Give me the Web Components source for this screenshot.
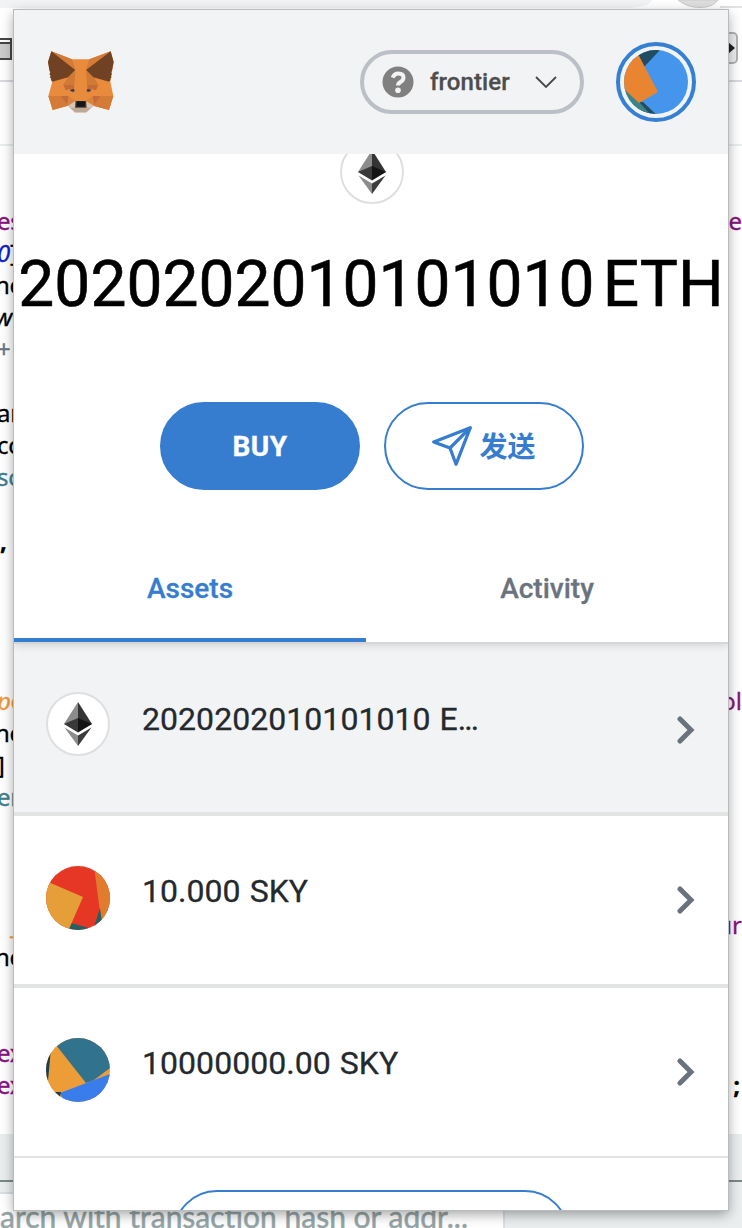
<!DOCTYPE html>
<html lang="zh-CN">
<head>
<meta charset="utf-8">
<title>Wallet</title>
<style>
html,body{margin:0;height:1228px;overflow:hidden;background:#fff}
body{font-family:Roboto,"Noto Sans CJK SC",sans-serif;position:relative;width:742px}
</style>
</head>
<body>
<page-backdrop></page-backdrop>
<wallet-popup></wallet-popup>
<script>
function define(name, html) {
  const t = document.createElement('template');
  t.innerHTML = html;
  customElements.define(name, class extends HTMLElement {
    constructor() {
      super();
      this.attachShadow({mode: 'open'}).appendChild(t.content.cloneNode(true));
    }
  });
}

define('code-line', `<style>
:host{display:flex;justify-content:space-between;height:32px;font:24px/34px "Noto Sans",sans-serif;color:#000;white-space:pre;-webkit-text-stroke:.3px}
.l{width:14px;overflow:hidden;color:var(--c,#000);text-indent:var(--in,-3px);letter-spacing:-.3px}
.r{width:14px;overflow:hidden;color:var(--rc,#881280);display:flex;justify-content:flex-end}
</style><span class="l"><slot></slot></span><span class="r"><slot name="end"></slot></span>`);

define('page-backdrop', `<style>
:host{display:flex;flex-direction:column;width:742px;height:1228px;background:#fff;overflow:hidden}
.top{height:8px;display:flex;justify-content:space-between;flex:none}
.addr{width:652px;background:#f1f3f4;border-radius:0 0 28px 0/0 0 8px 0}
.tools{height:72px;display:flex;justify-content:space-between;flex:none;border-bottom:2px solid #d9dae0}
.tools svg{display:block}
.band{height:62px;border-bottom:2px solid #ebeeef;flex:none}
.code{height:930px;padding-top:58px;box-sizing:content-box;flex:none}
.foot{flex:1;background:#eaeeef;display:flex;flex-direction:column}
.rule{height:46px;border-bottom:2px solid #7c8888;flex:none}
.search{margin-top:10px;width:503px;height:40px;border-top:2px solid #dadfe2;border-right:2px solid #dadfe2;background:#fff;font:30px/45px Lato,sans-serif;color:#95a5a6;-webkit-text-stroke:.5px #95a5a6;white-space:nowrap}
i{font-style:italic}
.n{--in:-5px}
</style>
<div class="top"><div class="addr"></div><svg width="66" height="8"><path d="M44 7H66" stroke="#e1e2e4" stroke-width="2"/><path d="M2 0Q11 7.500 24 7.500T42 0Z" fill="#dededf" stroke="#cbcbcc"/></svg></div>
<div class="tools"><svg width="14" height="72"><path d="M0 31H11V51H0" fill="#ccc" stroke="#454545" stroke-width="2"/><path d="M0 32H10V34H0Z" fill="#fff"/><path d="M0 35H11" stroke="#454545" stroke-width="2"/></svg>
<svg width="14" height="72"><rect x="-16" y="25" width="25" height="30" rx="4" fill="#eee" stroke="#b2b2b2" stroke-width="2"/><path d="M0 34L7 40L0 46Z" fill="#222"/></svg></div>
<div class="band"></div>
<div class="code">
<code-line style="--c:#881280">es<span slot="end">le</span></code-line>
<code-line style="--c:#0d22cc"><i>0</i><span style="color:#000">]</span></code-line>
<code-line class="n">ne</code-line>
<code-line class="n"><i>w</i>e</code-line>
<code-line style="--c:#697685">+</code-line>
<code-line></code-line>
<code-line>ar</code-line>
<code-line>cc</code-line>
<code-line style="--c:#40808f">sc</code-line>
<code-line></code-line>
<code-line><b style="padding-left:3px">,</b></code-line>
<code-line></code-line><code-line></code-line><code-line></code-line><code-line></code-line>
<code-line style="--c:#ee9a3c"><i>p</i>o<span slot="end">ol</span></code-line>
<code-line class="n">ne</code-line>
<code-line>]</code-line>
<code-line style="--c:#40808f">er</code-line>
<code-line></code-line><code-line></code-line><code-line></code-line>
<code-line style="--c:#ee9a3c"><span style="padding-left:13px">_</span><span slot="end">ur</span></code-line>
<code-line class="n">ne</code-line>
<code-line></code-line><code-line></code-line>
<code-line style="--c:#881280">ex</code-line>
<code-line style="--c:#881280;--rc:#000">ex<b slot="end" style="padding-right:2px">;</b></code-line>
</div>
<div class="foot"><div class="rule"></div><div class="search">arch with transaction hash or addr...</div></div>`);

define('fox-logo', `<style>:host{display:block;width:70px;height:64px}svg{display:block}</style>
<svg width="70" height="64" viewBox="30 30 210 192">
<path d="M46 34L108 58H160L224 34L233 66L223 125L232 168L219 210L172 197L151 217H116L96 197L50 210L37 168L49 125L36 66Z" fill="#e88b3c"/>
<path d="M46 34L108 58L118 90ZM224 34L160 58L150 90Z" fill="#d37b37"/>
<path d="M37 168H78L96 197L50 210ZM232 168H190L172 197L219 210Z" fill="#d57b38"/>
<path d="M118 92L96 112L82 134L115 135ZM150 92L174 112L187 134L153 135Z" fill="#d07a35"/>
<path d="M82 134L115 136L112 158L101 147L89 151ZM187 134L153 136L156 158L167 147L180 151Z" fill="#c46b38"/>
<path d="M75 168H98L94 195ZM193 168H170L174 195Z" fill="#c46b38"/>
<path d="M98 168L120 183L94 197ZM170 168L148 183L174 197Z" fill="#d98341"/>
<path d="M46 34L118 90L96 112L49 125L44 119L46 117L41 111L44 108L40 102L43 98L40 91L36 66Z" fill="#704123"/>
<path d="M224 34L150 90L172 112L219 125L224 119L222 117L227 111L224 108L228 102L225 98L228 91L233 66Z" fill="#704123"/>
<path d="M96 198L117 184V203H151V184L174 198L151 217H117Z" fill="#d7c6ba"/>
<path d="M103 203H164L151 217H117Z" fill="#bda998"/>
<path d="M119 183H150L152 203H117Z" fill="#454545"/><path d="M122 184H148L147 200H121Z" fill="#151617"/>
<path d="M101 151L113 146L117 154L108 155ZM166 151L155 146L151 154L160 155Z" fill="#334052"/>
</svg>`);

define('network-picker', `<style>
:host{display:flex;box-sizing:border-box;width:224px;height:64px;border:4px solid #bbbfc6;border-radius:32px;align-items:center;padding-left:18px;font:500 24px/32px Roboto,sans-serif;color:#4d4d4d}
.t{margin-left:16px;width:80px;white-space:nowrap;letter-spacing:.1px;-webkit-text-stroke:.3px}
.v{margin-left:25px}svg{display:block;flex:none}
</style><svg width="32" height="32" viewBox="0 0 32 32"><circle cx="16" cy="16" r="15.500" fill="#808080"/><path d="M10.700 11.700Q12 7.500 16.200 7.500Q21.500 7.500 21.500 11.700Q21.500 14.200 18.500 16Q16 17.500 16 19.500" fill="none" stroke="#f2f3f4" stroke-width="4"/><circle cx="16" cy="24.200" r="2.800" fill="#f2f3f4"/></svg>
<span class="t"><slot></slot></span><svg class="v" width="22" height="14"><path d="M1 2L11 12L21 2" fill="none" stroke="#484848" stroke-width="1.800"/></svg>`);

define('account-avatar', `<style>:host{display:block;box-sizing:border-box;width:80px;height:80px;border:4px solid #3580d2;border-radius:50%;padding:4px;background:#f2f3f4}
svg{display:block;border-radius:50%}</style>
<svg width="64" height="64"><path fill="#4595ec" d="M0 0H64V64H0Z"/><path fill="#204d60" d="M12 0H36L20 17ZM14 52H19L36 68H20Z"/><path fill="#3d8388" d="M0 38L16 53L26 64H0Z"/><path fill="#e98431" d="M-12 10L14 4L34 42L15 53L0 39Z"/></svg>`);

define('eth-icon', `<style>:host{display:block;box-sizing:border-box;width:64px;height:64px;border:2px solid #dedfe0;border-radius:50%;background:#fff;flex:none}svg{display:block}</style>
<svg width="60" height="60" viewBox="2 2 60 60"><path d="M32 10V38.500L18 32Z" fill="#8c8c8c"/><path d="M32 10V38.500L46 32Z" fill="#343434"/><path d="M18 32L32 26V40.500Z" fill="#393939"/><path d="M46 32L32 26V40.500Z" fill="#141414"/><path d="M18.500 35.500L32 43.500V54Z" fill="#8c8c8c"/><path d="M45.500 35.500L32 43.500V54Z" fill="#3c3c3b"/></svg>`);

define('sky-icon', `<style>:host{display:block;width:64px;height:64px}svg{display:block;border-radius:50%}</style>
<svg width="64" height="64"><path d="M0 0H64V64H0Z" fill="#e63725"/><path d="M48 0L55 54H64V0Z" fill="#e17c2f"/><path d="M54 42L56 56L48 61ZM25 57L43 62V64H22Z" fill="#285f60"/><path d="M0 15L37 31L23 63H0Z" fill="#e69e38"/></svg>`);

define('sea-icon', `<style>:host{display:block;width:64px;height:64px}svg{display:block;border-radius:50%}</style>
<svg width="64" height="64"><path d="M0 0H64V64H0Z" fill="#ec9d38"/><path d="M10 7L40 45L48 42L64 30V0H10Z" fill="#31728c"/><path d="M14 55L64 36V64H18Z" fill="#397ded"/><path d="M0 10H5L2 43H0ZM9 54H15L14 59Z" fill="#163f57"/></svg>`);

define('pill-button', `<style>:host{display:flex;box-sizing:border-box;width:200px;height:88px;border:2px solid #367dd0;border-radius:44px;align-items:center;justify-content:center;color:#367dd0;font:700 28px/40px Roboto,"Noto Sans CJK SC",sans-serif;gap:7px}
.t{padding-top:4px}
:host([primary]){background:#367dd0;color:#fff;letter-spacing:.4px;-webkit-text-stroke:.3px}
:host([primary]) .t{padding-top:2px}</style><slot name="icon"></slot><span class="t"><slot></slot></span>`);

define('wallet-tab', `<style>:host{display:flex;box-sizing:border-box;height:108px;align-items:center;justify-content:center;padding-top:6px;font:500 28px/40px Roboto,sans-serif;color:#6a737d;border-bottom:4px solid transparent;-webkit-text-stroke:.3px}
:host([selected]){color:#367dd0;border-color:#367dd0}</style><slot></slot>`);

define('asset-row', `<style>:host{display:flex;box-sizing:content-box;height:168px;border-bottom:4px solid #e2e3e3;background:var(--bg,#fff);padding:0 32px;align-items:flex-start;font:32px/40px Roboto,sans-serif;color:#24292e}
.icon{margin-top:var(--i,50px)}.t{margin:55px 0 0 32px;flex:1;white-space:nowrap;letter-spacing:.05px;word-spacing:1px;-webkit-text-stroke:.3px}
.v{margin:var(--v,70px) 0 0;display:block}</style>
<span class="icon"><slot name="icon"></slot></span><span class="t"><slot></slot></span>
<svg class="v" width="20" height="28"><path d="M4 3L15 14L4 25" fill="none" stroke="#6a737d" stroke-width="5" stroke-linecap="round" stroke-linejoin="miter"/></svg>`);

define('wallet-popup', `<style>
:host{position:absolute;left:14px;top:10px;width:714px;height:1200px;background:#fff;overflow:hidden;display:flex;flex-direction:column;box-shadow:0 0 0 1px #b9bbbc,0 4px 12px rgba(0,0,0,.38)}
header{height:144px;flex:none;background:#f2f3f4;display:flex;align-items:center;padding:0 32px;position:relative;z-index:1}
network-picker{margin-left:auto;margin-right:32px}
.over{height:388px;flex:none;display:flex;flex-direction:column;align-items:center;padding-left:2px}
.over eth-icon{margin-top:-14px}
.amount{margin:41px 0 0 -2px;height:79px;display:flex;gap:8px;font:64px/80px Roboto,sans-serif;letter-spacing:.05px;color:#000;white-space:nowrap;-webkit-text-stroke:.6px #000}
.buttons{margin-top:78px;display:flex;gap:24px}
.tabs{flex:none;display:grid;grid-template-columns:352px 362px;margin-top:-8px;height:108px;border-bottom:2px solid #d5d6d8;box-shadow:0 2px 8px rgba(0,0,0,.12);clip-path:inset(0 0 -12px 0);position:relative}
asset-row{flex:none}
.more{align-self:center;flex:none;margin-top:32px;width:396px}
</style>
<header><fox-logo></fox-logo><network-picker>frontier</network-picker><account-avatar></account-avatar></header>
<section class="over"><eth-icon></eth-icon>
<div class="amount"><span>2020202010101010</span><span>ETH</span></div>
<div class="buttons"><pill-button primary>BUY</pill-button><pill-button><svg slot="icon" width="40" height="40" viewBox="0 0 40 40" fill="none" stroke="#367dd0" stroke-width="3.200" stroke-linejoin="round"><path d="M38.300 1.700L1.700 16L18 22L24 38.300Z"/><path d="M38.300 1.700L18 22"/></svg>发送</pill-button></div></section>
<nav class="tabs"><wallet-tab selected>Assets</wallet-tab><wallet-tab>Activity</wallet-tab></nav>
<asset-row style="--bg:#f2f3f4;--i:48px;--v:72px"><eth-icon slot="icon"></eth-icon>2020202010101010 E<span style="letter-spacing:-2px">...</span></asset-row>
<asset-row><sky-icon slot="icon"></sky-icon>10.000 SKY</asset-row>
<asset-row style="border-bottom-width:2px"><sea-icon slot="icon"></sea-icon>10000000.00 SKY</asset-row>
<pill-button class="more"></pill-button>`);
</script>
</body>
</html>
